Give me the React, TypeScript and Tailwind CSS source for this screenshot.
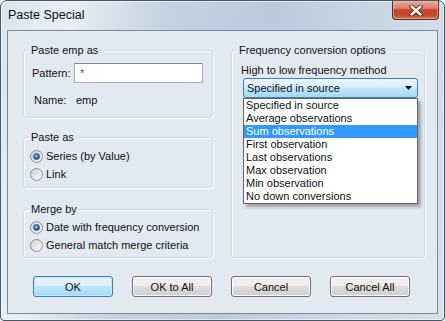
import type { ReactNode } from 'react';

const CLIENT_BG = 'bg-[#e3e9f1]';

function GroupBox({ label, className, children }: { label: string; className: string; children: ReactNode }) {
  return (
    <div
      className={`relative rounded-[3px] border border-[#d2dbe4] shadow-[inset_1px_1px_0_#f8fbfd,1px_1px_0_#f8fbfd] ${className}`}
    >
      <span className={`absolute -top-[8px] left-[6px] px-[1px] leading-[14px] ${CLIENT_BG}`}>{label}</span>
      {children}
    </div>
  );
}

function Radio({ checked, label }: { checked?: boolean; label: string }) {
  return (
    <div className="flex h-[18px] items-center">
      <span className="ml-[6px] flex h-[13px] w-[13px] items-center justify-center rounded-full border border-[#8a8f94] bg-[linear-gradient(135deg,#cfd3d7,#f6f7f8)]">
        {checked && (
          <span className="h-[7px] w-[7px] rounded-full border border-[#1f5178] bg-[radial-gradient(circle_at_40%_35%,#7fd0fb,#1a6cb0_60%,#0c3f6c)]" />
        )}
      </span>
      <span className="ml-[3px] leading-[14px]">{label}</span>
    </div>
  );
}

function Button({ label, primary }: { label: string; primary?: boolean }) {
  return (
    <button
      className={
        primary
          ? 'h-[21px] w-[80px] rounded-[3px] border border-[#3c7fb1] bg-[linear-gradient(#e7f5fd_0%,#d9f0fc_45%,#bee6fd_50%,#a7d9f5_100%)] leading-[14px] shadow-[inset_0_0_0_1px_#bde8fd]'
          : 'h-[21px] w-[80px] rounded-[3px] border border-[#707070] bg-[linear-gradient(#f2f2f2_0%,#ebebeb_45%,#dddddd_50%,#cfcfcf_100%)] leading-[14px] shadow-[inset_0_0_0_1px_#fbfbfb]'
      }
    >
      {label}
    </button>
  );
}

const methods = [
  'Specified in source',
  'Average observations',
  'Sum observations',
  'First observation',
  'Last observations',
  'Max observation',
  'Min observation',
  'No down conversions',
];

export default function App() {
  return (
    <div className="h-[321px] w-[445px] bg-white font-['Liberation_Sans',Arial,sans-serif] text-[11px] text-[#111]">
      <div className="flex h-full w-full flex-col rounded-t-[7px] rounded-b-[4px] border border-[#48566a] bg-[linear-gradient(100deg,#dbe5ef_0%,#e7eef6_14%,#c3d1e1_34%,#bccbdc_55%,#cbd8e6_80%,#d7e1ec_100%)] shadow-[inset_0_0_0_1px_rgba(255,255,255,0.55)]">
        {/* Title bar */}
        <div className="flex h-[29px] shrink-0 items-center justify-between">
          <span className="pl-[7px] text-[12.5px] text-[#0f0f0f]">Paste Special</span>
          <button className="mr-[5px] flex h-[19px] w-[47px] items-center justify-center self-start rounded-b-[4px] border border-t-0 border-[#5b2a20] bg-[linear-gradient(#e9a99b_0%,#dc7f6b_40%,#c5432a_50%,#c9482e_80%,#d7795f_100%)] shadow-[inset_0_0_0_1px_rgba(255,210,200,0.45)]">
            <svg width="14" height="11" viewBox="0 0 14 11">
              <path d="M2.5 1.5 L11.5 9.5 M11.5 1.5 L2.5 9.5" stroke="#3b1a14" strokeWidth="4.2" strokeLinecap="round" />
              <path d="M2.5 1.5 L11.5 9.5 M11.5 1.5 L2.5 9.5" stroke="#fff" strokeWidth="2.4" strokeLinecap="round" />
            </svg>
          </button>
        </div>

        {/* Client area */}
        <div className={`mx-[6px] flex h-[284px] flex-col border border-[#7d8a99] pt-[19px] pl-[15px] ${CLIENT_BG}`}>
          <div className="flex gap-[18px]">
            <div className="flex w-[190px] flex-col">
              <GroupBox label="Paste emp as" className="h-[68px] pt-[12px] pl-[8px]">
                <div className="flex items-center">
                  <span className="w-[42px] leading-[14px]">Pattern:</span>
                  <div className="flex h-[20px] w-[129px] items-center border border-[#abadb3] border-t-[#7b8a9b] bg-white pl-[5px]">
                    <span className="text-[#8a4b20]">*</span>
                  </div>
                </div>
                <div className="mt-[10px] flex pl-[2px] leading-[14px]">
                  <span className="w-[42px]">Name:</span>
                  <span>emp</span>
                </div>
              </GroupBox>

              <GroupBox label="Paste as" className="mt-[19px] h-[51px] pt-[9px]">
                <Radio checked label="Series (by Value)" />
                <Radio label="Link" />
              </GroupBox>

              <GroupBox label="Merge by" className="mt-[21px] h-[49px] pt-[8px]">
                <Radio checked label="Date with frequency conversion" />
                <Radio label="General match merge criteria" />
              </GroupBox>
            </div>

            <GroupBox label="Frequency conversion options" className="h-[208px] w-[194px] pt-[12px] pl-[9px]">
              <div className="leading-[14px]">High to low frequency method</div>
              <div className="relative mt-[1px] ml-[2px] w-[175px]">
                <div className="flex h-[20px] items-center justify-between rounded-[3px] border border-[#3c7fb1] bg-[linear-gradient(#eaf6fd_0%,#d9f0fc_45%,#bee6fd_50%,#a7d9f5_100%)] pr-[5px] pl-[3px]">
                  <span className="leading-[14px]">Specified in source</span>
                  <svg width="7" height="4" viewBox="0 0 7 4">
                    <path d="M0 0 H7 L3.5 4 Z" fill="#111" />
                  </svg>
                </div>
                <ul className="absolute top-full left-0 w-full border border-[#646464] bg-white shadow-[3px_3px_3px_rgba(0,0,0,0.3)]">
                  {methods.map((m) => (
                    <li
                      key={m}
                      className={`h-[13px] pl-[2px] leading-[13px] ${m === 'Sum observations' ? 'bg-[#3399ff] text-white' : ''}`}
                    >
                      {m}
                    </li>
                  ))}
                </ul>
              </div>
            </GroupBox>
          </div>

          <div className="mt-[18px] flex gap-[19px] pl-[10px]">
            <Button primary label="OK" />
            <Button label="OK to All" />
            <Button label="Cancel" />
            <Button label="Cancel All" />
          </div>
        </div>
      </div>
    </div>
  );
}
